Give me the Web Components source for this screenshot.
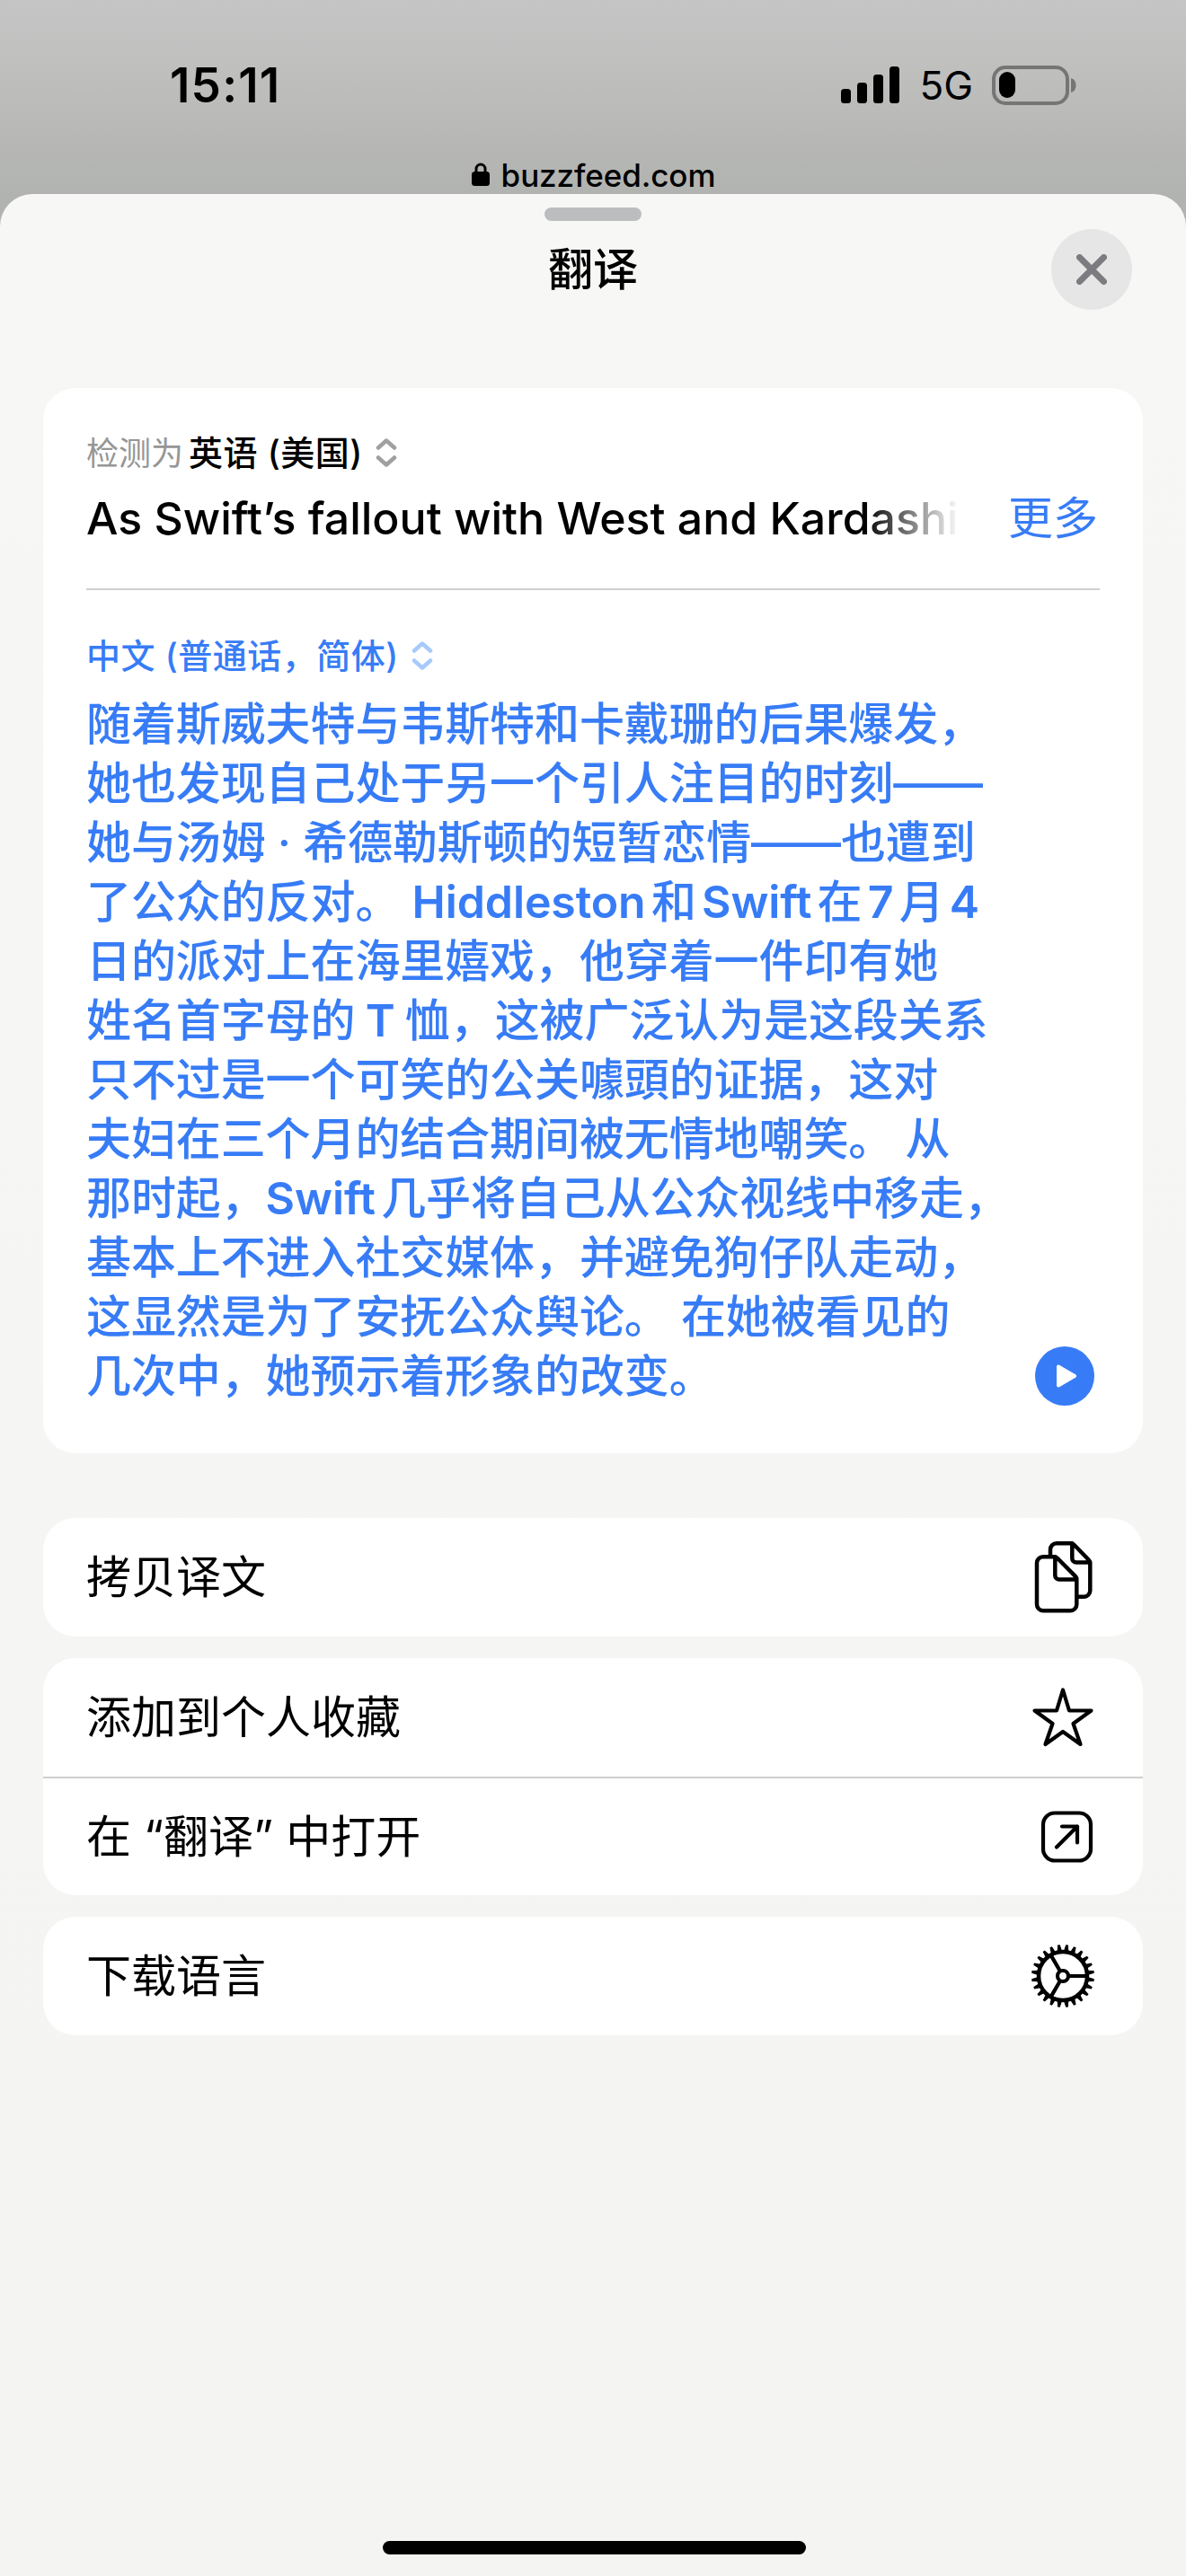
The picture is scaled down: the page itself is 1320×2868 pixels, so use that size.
<!DOCTYPE html>
<html lang="zh-CN">
<head>
<meta charset="utf-8">
<title>翻译</title>
<style>
html,body{margin:0;padding:0;height:100%}
body{font-family:Inter,"Noto Sans CJK SC",sans-serif;background:#bdbebc}
</style>
</head>
<body>
<template id="t-app">
<style>
:host{display:flex;flex-direction:column;width:1320px;height:2868px;overflow:hidden;
 background:linear-gradient(180deg,#c5c5c5 0,#bebebd 90px,#b1b3b0 216px);color:#000}
</style>
<slot></slot>
</template>

<template id="t-status">
<style>
:host{display:flex;align-items:center;justify-content:space-between;box-sizing:border-box;padding:30px 122px 0 189px;flex:none;height:160px}
.time{font:600 53px/64px Inter,sans-serif;letter-spacing:1.2px}
.right{display:flex;align-items:center}
.net{font:400 44px/54px Inter,sans-serif;margin:0 21px 0 22px}
svg{display:block}
</style>
<div class="time"><slot name="time"></slot></div>
<div class="right">
<svg width="65" height="42" viewBox="0 0 65 42"><g fill="#000"><rect x="0" y="25" width="11" height="16" rx="3.5"/><rect x="18" y="18" width="11" height="23" rx="3.5"/><rect x="36" y="9" width="11" height="32" rx="3.5"/><rect x="54" y="0" width="11" height="41" rx="3.5"/></g></svg>
<span class="net"><slot name="net"></slot></span>
<svg width="94" height="44" viewBox="0 0 94 44"><rect x="2" y="2" width="82" height="40" rx="13" fill="none" stroke="#757575" stroke-width="4"/><rect x="8" y="7" width="18" height="29" rx="9" fill="#000"/><path d="M88 14c3.500.8 5.500 4 5.500 8s-2 7.200-5.500 8z" fill="#757575"/></svg>
</div>
</template>

<template id="t-url">
<style>
:host{display:flex;align-items:center;justify-content:center;gap:12px;box-sizing:border-box;height:56px;padding-top:14px;flex:none;font:500 35px/42px Inter,sans-serif;letter-spacing:-.1px}
svg{display:block;margin-top:-3px}
</style>
<svg width="22" height="28" viewBox="0 0 22 28"><path d="M6 12V8a5 5 0 0 1 10 0v4" fill="none" stroke="#000" stroke-width="3"/><rect x="1" y="11" width="20" height="16" rx="3.500" fill="#000"/></svg>
<slot></slot>
</template>

<template id="t-sheet">
<style>
:host{display:flex;flex-direction:column;flex:1;min-height:0;position:relative;border-radius:36px 36px 0 0;background:linear-gradient(180deg,#f7f7f6 0,#f4f4f3 100%);padding:0 48px}
.handle{width:108px;height:15px;border-radius:8px;background:#bcbdbe;margin:15px auto 0;flex:none}
.top{display:grid;grid-template-columns:1fr auto 1fr;align-items:center;height:90px;margin:9px 0 87px 0;flex:none}
h1{grid-column:2;margin:0;font:500 50px/60px Inter,"Noto Sans CJK SC",sans-serif}
.close{grid-column:3;justify-self:end;margin-right:12px;width:90px;height:90px;border-radius:50%;background:#e6e6e6;display:flex;align-items:center;justify-content:center;border:0;padding:0}
.list{display:flex;flex-direction:column;flex:1;min-height:0}
.home{width:471px;height:15px;border-radius:8px;background:#000;margin:auto auto 24px;flex:none;transform:translateX(1px)}
</style>
<div class="handle"></div>
<div class="top"><h1><slot name="title"></slot></h1><div class="close"><svg width="34" height="34" viewBox="0 0 34 34"><path d="M3.500 3.500l27 27M30.500 3.500l-27 27" stroke="#7c7c80" stroke-width="7" stroke-linecap="round"/></svg></div></div>
<div class="list"><slot></slot><div class="home"></div></div>
</template>

<template id="t-card">
<style>
:host{display:block;background:#fff;border-radius:36px;padding:47px 54px 53px 48px;margin-bottom:72px;flex:none}
.lang{display:flex;align-items:center;gap:14px;height:50px;font:500 38px/50px Inter,"Noto Sans CJK SC",sans-serif;letter-spacing:.5px;white-space:nowrap}
.g{color:#969696;font-size:36px;font-weight:400;margin-right:6px;letter-spacing:0}
.src{display:flex;align-items:center;justify-content:space-between;height:66px;margin-top:15px}
.txt{width:972px;overflow:hidden;white-space:nowrap;font:500 50px/66px Inter,"Noto Sans CJK SC",sans-serif;-webkit-mask-image:linear-gradient(90deg,#000 89%,transparent 100%);mask-image:linear-gradient(90deg,#000 89%,transparent 100%)}
.more{color:#377cf6;font:400 50px/66px Inter,"Noto Sans CJK SC",sans-serif;margin-right:-4px}
hr{border:0;height:2px;background:#cfcfcf;margin:45px -6px 0 0}
.tlang{margin-top:48px;color:#377cf6}
.out{display:flex;justify-content:space-between;align-items:flex-end;margin-top:18px}
.body{color:#377cf6;font:500 50px/66px Inter,"Noto Sans CJK SC",sans-serif;white-space:nowrap;text-autospace:normal;letter-spacing:-.1px}
.play{flex:none;display:block}
svg.ch{display:block;flex:none}
</style>
<div class="lang"><span><span class="g"><slot name="detected"></slot></span><slot name="from"></slot></span><svg class="ch" width="24" height="32" viewBox="0 0 24 32"><path d="M3 10.500l9-8 9 8M3 21.500l9 8 9-8" fill="none" stroke="#a0a0a0" stroke-width="4.500" stroke-linecap="round" stroke-linejoin="round"/></svg></div>
<div class="src"><div class="txt"><slot name="source"></slot></div><div class="more"><slot name="more"></slot></div></div>
<hr>
<div class="lang tlang"><span><slot name="to"></slot></span><svg class="ch" width="24" height="32" viewBox="0 0 24 32"><path d="M3 10.500l9-8 9 8M3 21.500l9 8 9-8" fill="none" stroke="#a6cbfb" stroke-width="4.500" stroke-linecap="round" stroke-linejoin="round"/></svg></div>
<div class="out"><div class="body"><slot name="result"></slot></div><svg class="play" width="66" height="66" viewBox="0 0 66 66"><circle cx="33" cy="33" r="33" fill="#377cf6"/><path d="M26 22.500v21l18-10.500z" fill="#fff" stroke="#fff" stroke-width="4" stroke-linejoin="round"/></svg></div>
</template>

<template id="t-group">
<style>
:host{display:block;background:#fff;border-radius:36px;margin-bottom:24px;flex:none;overflow:hidden}
::slotted(action-row:not(:first-child)){border-top:2px solid #cfcfcf}
</style>
<slot></slot>
</template>

<template id="t-row">
<style>
:host{display:flex;align-items:center;justify-content:space-between;box-sizing:border-box;height:132px;padding:0 49px 0 48px;font:400 50px/66px Inter,"Noto Sans CJK SC",sans-serif}
.ic{width:80px;height:80px;flex:none}
svg{display:block;overflow:visible}
</style>
<span><slot></slot></span>
<div class="ic"></div>
</template>

<div id="root"></div>

<script>
const fromT = id => document.getElementById(id).content.cloneNode(true);
const ICONS = {
 copy:'<path d="M26 15.700V9.500a7 7 0 0 1 7-7.200h15.800a5 5 0 0 1 3.500 1.500l16.500 17a5 5 0 0 1 1.500 3.500v30.500a7 7 0 0 1-7 7H55.300M50.300 2.300V19a4.500 4.500 0 0 0 4.500 4.500h15.500" fill="none" stroke="#000" stroke-width="4.500" stroke-linecap="round" stroke-linejoin="round"/><path d="M11 24.500a7 7 0 0 1 7-7.200h12.300a5 5 0 0 1 3.500 1.500l20 20a5 5 0 0 1 1.500 3.500v28a7 7 0 0 1-7 7H18a7 7 0 0 1-7-7z M31.300 17.300V38a4.500 4.500 0 0 0 4.500 4.500h19.500" fill="none" stroke="#000" stroke-width="4.500" stroke-linecap="round" stroke-linejoin="round"/>',
 star:'<path d="M40 9.500 47 32.500H71.500L51.500 47 59.500 70 40 56 20.500 70 28.500 47 8.500 32.500H33Z" fill="none" stroke="#000" stroke-width="4.200" stroke-linejoin="round"/>',
 open:'<rect x="18" y="13.500" width="53" height="53" rx="13" fill="none" stroke="#000" stroke-width="4.200"/><path d="M33 51.500 56 28.500M39 28.500H56V46.500" fill="none" stroke="#000" stroke-width="4.200" stroke-linecap="round" stroke-linejoin="round"/>',
 gear:(()=>{let t='';const n=24;for(let i=0;i<n;i++){const a=(i+.5)*2*Math.PI/n,d=.085;
   const p=(r,b)=>(40+r*Math.cos(b)).toFixed(2)+' '+(40+r*Math.sin(b)).toFixed(2);
   t+='M'+p(27,a-d*1.25)+'L'+p(35,a-d*.45)+'L'+p(35,a+d*.45)+'L'+p(27,a+d*1.25)+'Z';}
   return '<path d="'+t+'" fill="#000"/><circle cx="40" cy="40" r="27" fill="none" stroke="#000" stroke-width="4.500"/><circle cx="40" cy="40" r="6" fill="none" stroke="#000" stroke-width="4.200"/><path d="M46 40H67M37 34.800 26.500 16.600M37 45.200 26.500 63.400" stroke="#000" stroke-width="4.200" fill="none"/>';})()
};
class Base extends HTMLElement{
  constructor(){super();this.attachShadow({mode:'open'}).appendChild(fromT(this.constructor.tpl));}
}
class TsApp extends Base{static tpl='t-app'}
class TsStatus extends Base{static tpl='t-status'}
class TsUrl extends Base{static tpl='t-url'}
class TsSheet extends Base{static tpl='t-sheet'}
class TsCard extends Base{static tpl='t-card'}
class ActionGroup extends Base{static tpl='t-group'}
class ActionRow extends Base{static tpl='t-row';
  connectedCallback(){this.shadowRoot.querySelector('.ic').innerHTML='<svg width="80" height="80" viewBox="0 0 80 80">'+ICONS[this.getAttribute('icon')]+'</svg>';}
}
customElements.define('ts-app',TsApp);
customElements.define('status-strip',TsStatus);
customElements.define('url-chip',TsUrl);
customElements.define('translate-sheet',TsSheet);
customElements.define('translate-card',TsCard);
customElements.define('action-group',ActionGroup);
customElements.define('action-row',ActionRow);

const L = (s,x='') => '<span style="font-weight:600;'+x+'">'+s+'</span>';
document.getElementById('root').innerHTML = `
<ts-app>
 <status-strip><span slot="time">15:11</span><span slot="net">5G</span></status-strip>
 <url-chip>buzzfeed.com</url-chip>
 <translate-sheet>
  <span slot="title">翻译</span>
  <translate-card>
   <span slot="detected">检测为</span>
   <span slot="from">英语 (美国)</span>
   <span slot="source">As Swift’s fallout with West and Kardashi</span>
   <span slot="more">更多</span>
   <span slot="to">中文 (普通话，简体)</span>
   <span slot="result">随着斯威夫特与韦斯特和卡戴珊的后果爆发，<br>她也发现自己处于另一个引人注目的时刻——<br>她与汤姆 · 希德勒斯顿的短暂恋情——也遭到<br>了公众的反对。 ${L('Hiddleston')}和${L('Swift')}在${L('7')}月${L('4')}<br>日的派对上在海里嬉戏，他穿着一件印有她<br>姓名首字母的${L('T','margin:0 5px')}恤，这被广泛认为是这段关系<br>只不过是一个可笑的公关噱頭的证据，这对<br>夫妇在三个月的结合期间被无情地嘲笑。 从<br>那时起，${L('Swift')}几乎将自己从公众视线中移走，<br>基本上不进入社交媒体，并避免狗仔队走动，<br>这显然是为了安抚公众舆论。 在她被看见的<br>几次中，她预示着形象的改变。</span>
  </translate-card>
  <action-group><action-row icon="copy">拷贝译文</action-row></action-group>
  <action-group><action-row icon="star">添加到个人收藏</action-row><action-row icon="open">在 “翻译” 中打开</action-row></action-group>
  <action-group><action-row icon="gear">下载语言</action-row></action-group>
 </translate-sheet>
</ts-app>`;
</script>
</body>
</html>
